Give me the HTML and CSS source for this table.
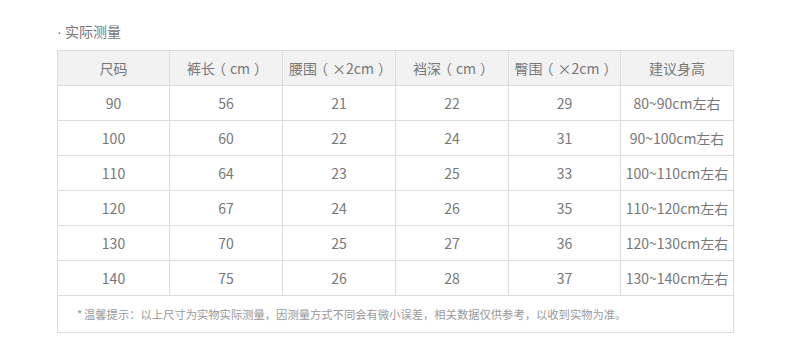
FILE: index.html
```html
<!DOCTYPE html>
<html lang="zh-CN">
<head>
<meta charset="utf-8">
<title>实际测量</title>
<link rel="stylesheet" href="styles.css">
</head>
<body>
<div class="page">
  <div class="title"><span class="dot">·</span>实际测量</div>
  <table class="size-table">
    <colgroup>
      <col class="c1"><col class="c2"><col class="c3"><col class="c4"><col class="c5"><col class="c6">
    </colgroup>
    <thead>
      <tr>
        <th>尺码</th>
        <th>裤长<span class="par">（</span>cm<span class="par">）</span></th>
        <th>腰围<span class="par">（</span>×2cm<span class="par">）</span></th>
        <th>裆深<span class="par">（</span>cm<span class="par">）</span></th>
        <th>臀围<span class="par">（</span>×2cm<span class="par">）</span></th>
        <th>建议身高</th>
      </tr>
    </thead>
    <tbody>
      <tr><td>90</td><td>56</td><td>21</td><td>22</td><td>29</td><td>80~90cm左右</td></tr>
      <tr><td>100</td><td>60</td><td>22</td><td>24</td><td>31</td><td>90~100cm左右</td></tr>
      <tr><td>110</td><td>64</td><td>23</td><td>25</td><td>33</td><td>100~110cm左右</td></tr>
      <tr><td>120</td><td>67</td><td>24</td><td>26</td><td>35</td><td>110~120cm左右</td></tr>
      <tr><td>130</td><td>70</td><td>25</td><td>27</td><td>36</td><td>120~130cm左右</td></tr>
      <tr><td>140</td><td>75</td><td>26</td><td>28</td><td>37</td><td>130~140cm左右</td></tr>
      <tr class="note"><td colspan="6"><span class="star">*</span>温馨提示<span class="pu">：</span>以上尺寸为实物实际测量<span class="pu">，</span>因测量方式不同会有微小误差<span class="pu">，</span>相关数据仅供参考<span class="pu">，</span>以收到实物为准。</td></tr>
    </tbody>
  </table>
</div>
</body>
</html>
```
FILE: styles.css
```css
html, body {
  margin: 0;
  padding: 0;
  background: #ffffff;
}
body {
  font-family: "Noto Sans CJK SC", "Noto Sans", sans-serif;
  color: #777777;
}
.page {
  padding: 21px 0 0 57px;
}
.title {
  font-size: 14px;
  line-height: 20px;
  height: 20px;
  color: #777777;
}
.title .dot {
  font-family: "Liberation Sans", sans-serif;
  display: inline-block;
  width: 8px;
}
.size-table {
  margin-top: 9px;
  border-collapse: collapse;
  table-layout: fixed;
  width: 676px;
}
.size-table col.c1 { width: 112px; }
.size-table col.c2 { width: 113px; }
.size-table col.c3 { width: 113px; }
.size-table col.c4 { width: 113px; }
.size-table col.c5 { width: 112px; }
.size-table col.c6 { width: 113px; }
.size-table th,
.size-table td {
  border: 1px solid #dddddd;
  height: 35px;
  padding: 0;
  text-align: center;
  font-size: 14px;
  font-weight: normal;
  color: #777777;
  white-space: nowrap;
  box-sizing: border-box;
}
.size-table th {
  background: #f2f2f2;
}
.par {
  font-feature-settings: "halt" 1;
  padding: 0 4px;
}
.size-table .note td {
  height: 37px;
  text-align: left;
  padding-left: 19px;
  font-size: 11.3px;
  color: #999999;
}
.star {
  display: inline-block;
  width: 7px;
}
.pu {
  font-family: "Noto Sans CJK TC", "Noto Sans CJK SC", sans-serif;
}
```
